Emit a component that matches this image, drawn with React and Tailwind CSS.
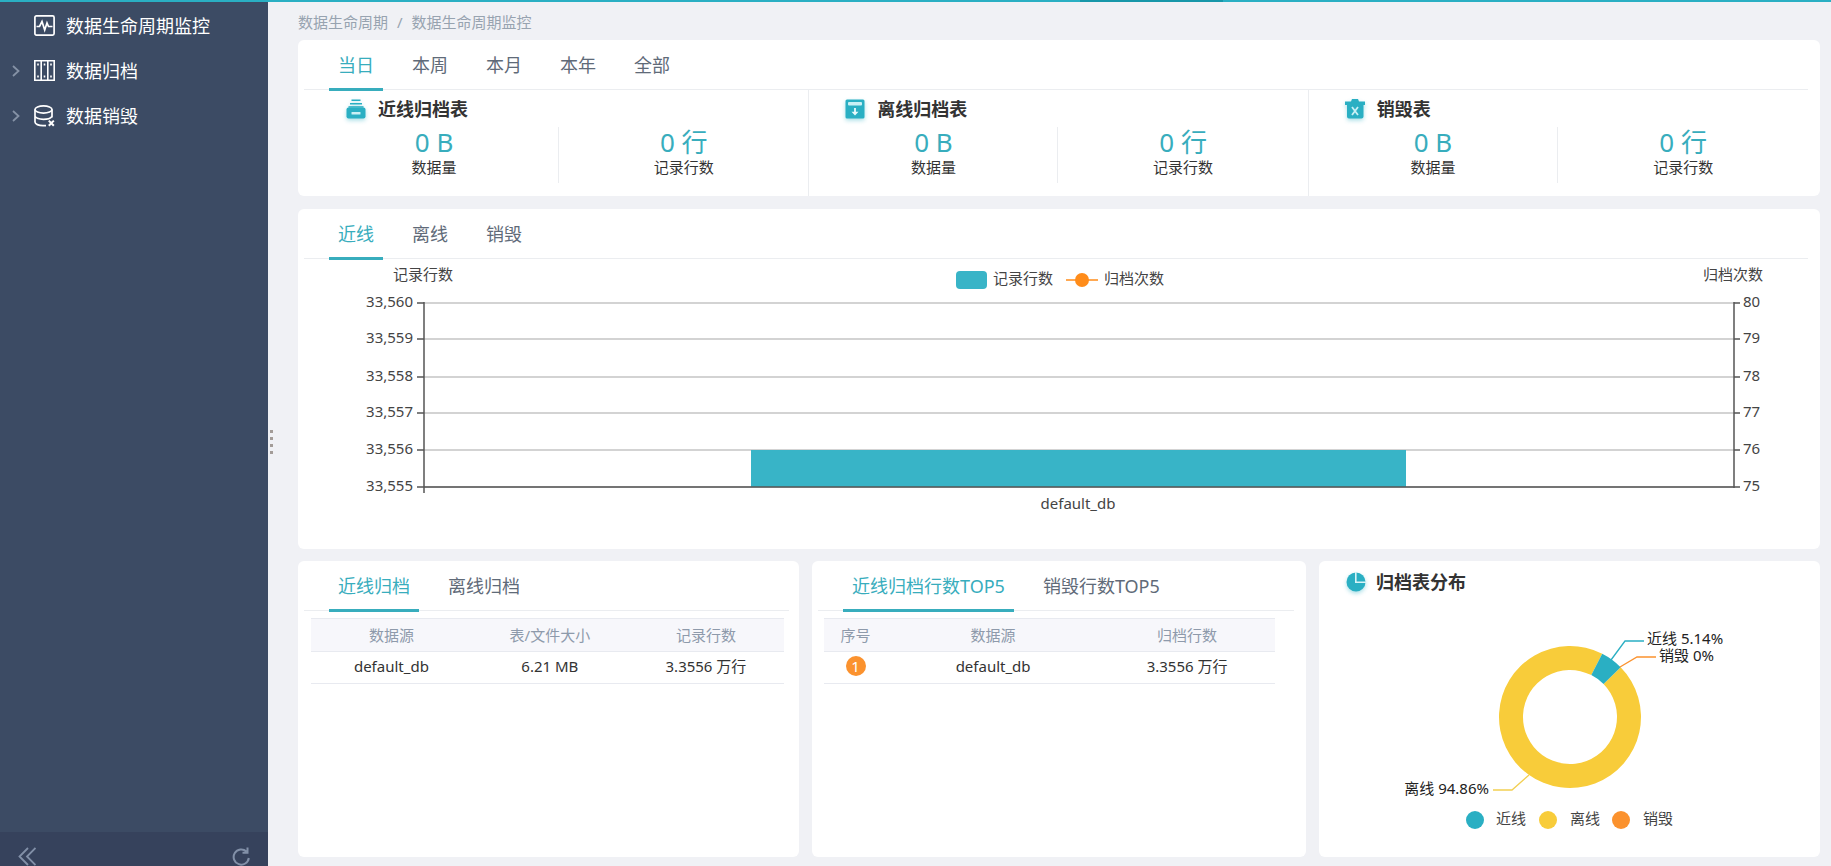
import { useState } from "react";

const menu = [
  { id: "monitor", label: "数据生命周期监控", expandable: false },
  { id: "archive", label: "数据归档", expandable: true },
  { id: "destroy", label: "数据销毁", expandable: true },
];

const stats = [
  { id: "near", title: "近线归档表", size: "0 B", rows: "0 行" },
  { id: "offline", title: "离线归档表", size: "0 B", rows: "0 行" },
  { id: "destroy", title: "销毁表", size: "0 B", rows: "0 行" },
];

const ticks = [
  { y: 44, left: "33,560", right: "80" },
  { y: 80, left: "33,559", right: "79" },
  { y: 118, left: "33,558", right: "78" },
  { y: 154, left: "33,557", right: "77" },
  { y: 191, left: "33,556", right: "76" },
  { y: 228, left: "33,555", right: "75" },
];

const shares = [
  { label: "近线", color: "#2aafc3", dot: 156, text: 177 },
  { label: "离线", color: "#f8cc3a", dot: 229, text: 251 },
  { label: "销毁", color: "#fb922e", dot: 302, text: 324 },
];

const MenuIcon = ({ id }) => {
  if (id === "monitor") {
    return (
      <svg width="21" height="21" viewBox="0 0 21 21" fill="none" stroke="currentColor" strokeWidth="1.7">
        <rect x="0.9" y="0.9" width="19.2" height="19.2" rx="1.5" />
        <path d="M2.500 11.500h3L8 6.500l2.700 8.500 2.300-7 1.500 3.500h4" />
      </svg>
    );
  }
  if (id === "archive") {
    return (
      <svg width="21" height="21" viewBox="0 0 21 21" fill="none" stroke="currentColor" strokeWidth="1.6">
        <path d="M0.8 0.8h19.4v19.4H0.8zM7.2 1v19M13.8 1v19" />
        <path d="M4 3.5v2M4 15.5v2M10.5 3.5v2M10.5 15.5v2M17 3.5v2M17 15.5v2" />
      </svg>
    );
  }
  return (
    <svg width="21" height="22" viewBox="0 0 21 22" fill="none" stroke="currentColor" strokeWidth="1.7">
      <ellipse cx="9.5" cy="4.5" rx="8.5" ry="3.6" />
      <path d="M1 4.5v12.6c0 2 3.6 3.6 8 3.6h3M18 4.5v8M1 10.7c0 2 3.8 3.6 8.5 3.6 3.6 0 7-1 8.2-2.6" />
      <path d="M14.8 15.6l5 5.200M19.8 15.600l-5 5.200" strokeWidth="2" />
    </svg>
  );
};

const StatIcon = ({ id }) => (
  <svg width="20" height="20" viewBox="0 0 20 20" className="shrink-0 drop-shadow-[0_2px_2px_rgba(42,175,195,0.4)]">
    {id === "near" && (
      <>
        <path d="M5.5 0.500h9v1.500h-9zM4 4h12v1.500H4z" fill="#2aafc3" />
        <path d="M2.500 7.200h15v1.500h-15z" fill="#2aafc3" />
        <rect x="0.5" y="8.500" width="19" height="11" rx="2" fill="#2aafc3" />
        <rect x="5.5" y="13" width="9" height="2.4" rx="0.5" fill="#c9f0f5" />
      </>
    )}
    {id === "offline" && (
      <>
        <rect x="0.5" y="0.5" width="19" height="19" rx="1.5" fill="#2aafc3" />
        <rect x="3" y="3" width="14" height="3.4" rx="1" fill="#c9f0f5" />
        <path d="M9.1 9h1.800v3.800h2.600L10 16.500l-3.500-3.700h2.600z" fill="#e9fafc" />
      </>
    )}
    {id === "destroy" && (
      <>
        <path d="M0 2.500h6L7 0h6l1 2.500h6V6h-1.500v11.500a2 2 0 0 1-2 2H4a2 2 0 0 1-2-2V6H0z" fill="#2aafc3" />
        <path d="M7 8l6 8M13 8l-6 8" stroke="#c9f0f5" strokeWidth="1.8" />
      </>
    )}
    {id === "pie" && (
      <>
        <circle cx="10" cy="10" r="9.500" fill="#2aafc3" />
        <path d="M9.800 0v10.300H20" fill="none" stroke="#d8f4f7" strokeWidth="1.600" />
      </>
    )}
  </svg>
);

const Tabs = ({ items }) => {
  const [active, setActive] = useState(items[0]);
  return (
    <div role="tablist" className="flex h-[50px] gap-5 border-b border-[#ebedf0] pl-[25px]">
      {items.map(t => (
        <button key={t} role="tab" aria-selected={active === t} onClick={() => setActive(t)}
          className={`-mb-0.5 h-[51px] border-b-3 px-[9px] pt-0.5 text-[18px] leading-[46px] whitespace-nowrap cursor-pointer
            ${active === t ? "border-[#38adbd] text-[#38adbd]" : "border-transparent text-[#606a78]"}`}>
          {t}
        </button>
      ))}
    </div>
  );
};

const BarChart = () => (
  <svg viewBox="0 0 1522 290" className="block w-full" fontSize="15" fill="#444">
    {/* axis names */}
    <text x="125" y="21" textAnchor="middle">记录行数</text>
    <text x="1435" y="21" textAnchor="middle">归档次数</text>

    {/* legend */}
    <rect x="658" y="12" width="31" height="18" rx="4" fill="#38b4c7" />
    <text x="695" y="25">记录行数</text>
    <path d="M768 21h32" stroke="#ff8c1a" strokeWidth="1.5" />
    <circle cx="784" cy="21" r="7" fill="#ff8c1a" />
    <text x="806" y="25">归档次数</text>

    {ticks.map(t => (
      <g key={t.y}>
        <path d={`M126 ${t.y}H1436`} stroke="#d3d3d3" strokeWidth="2" />
        <path d={`M119 ${t.y}h7M1436 ${t.y}h6`} stroke="#555" strokeWidth="1.5" />
        <text x="115" y={t.y + 4} textAnchor="end">{t.left}</text>
        <text x="1445" y={t.y + 4}>{t.right}</text>
      </g>
    ))}

    <rect x="453" y="191" width="655" height="37" fill="#38b4c7" />
    <path d="M126 43v191M1436 43v186M126 228h1310" stroke="#555" strokeWidth="1.5" />
    <text x="780" y="250" textAnchor="middle">default_db</text>
  </svg>
);

// start / end are degrees clockwise from the top
const arc = (start, end) => {
  const p = (r, a) => `${251 + r * Math.sin(a * Math.PI / 180)} ${115 - r * Math.cos(a * Math.PI / 180)}`;
  const large = end - start > 180 ? 1 : 0;
  return `M${p(71, start)}A71 71 0 ${large} 1 ${p(71, end)}L${p(47, end)}A47 47 0 ${large} 0 ${p(47, start)}Z`;
};

const DonutChart = () => (
  <svg viewBox="0 0 501 255" className="block w-full" fontSize="15">
    <path d={arc(45.5, 387)} fill="#f8cc3a" />
    <path d={arc(27, 45.5)} fill="#2aafc3" />
    <g fill="none" strokeWidth="1.3">
      <path d="M292 58l14-19h19" stroke="#2aafc3" />
      <path d="M301 65l17-10h19" stroke="#fb922e" />
      <path d="M210 173l-17 15h-19" stroke="#f2cf52" />
    </g>
    <g fill="#222">
      <text x="328" y="42">近线 5.14%</text>
      <text x="340" y="59">销毁 0%</text>
      <text x="170" y="192" textAnchor="end">离线 94.86%</text>
    </g>
    {shares.map(s => (
      <g key={s.label}>
        <circle cx={s.dot} cy="218" r="9" fill={s.color} />
        <text x={s.text} y="222" fill="#444">{s.label}</text>
      </g>
    ))}
  </svg>
);

const th = "h-[33px] border-y border-[#e8eaf0] bg-[#f7f7fb] p-0 font-normal text-[#8e9aab]";
const td = "h-8 border-b border-[#e8eaf0] p-0 pb-1";

const App = () => {
  return (
    <div className="flex min-h-screen flex-col bg-[#f0f1f5] font-['Noto_Sans','Noto_Sans_CJK_SC',sans-serif] text-[15px] leading-5 text-[#333]">
      <div className="flex h-0.5 bg-[#2aafc3]">
        <div className="ml-[59%] w-[143px] bg-[#1797a9]" />
      </div>

      <div className="flex flex-1">
        {/* SIDEBAR */}
        <aside className="flex w-[268px] shrink-0 flex-col bg-[#3c4b64]">
          <nav className="flex-1 pt-px">
            {menu.map(m => (
              <a key={m.id} href="#" className="flex h-[45px] items-center pl-3 text-[18px] text-white">
                <span className="w-[22px] text-[#8592a6]">
                  {m.expandable && (
                    <svg width="8" height="12" viewBox="0 0 8 12" fill="none" stroke="currentColor" strokeWidth="1.8">
                      <path d="M1 1l5.5 5L1 11" />
                    </svg>
                  )}
                </span>
                <MenuIcon id={m.id} />
                <span className="ml-[11px]">{m.label}</span>
              </a>
            ))}
          </nav>
          <div className="flex h-[34px] items-end justify-between bg-[#36425c] px-[18px] text-[#8290a8]">
            <button aria-label="收起">
              <svg width="18" height="19" viewBox="0 0 18 19" fill="none" stroke="currentColor" strokeWidth="1.8">
                <path d="M10 1L1.5 9.5 10 18M17.5 1L9 9.5l8.5 8.5" />
              </svg>
            </button>
            <button aria-label="刷新">
              <svg width="18" height="19" viewBox="0 0 18 19" fill="none" stroke="currentColor" strokeWidth="2">
                <path d="M14.5 4.5A7.6 7.6 0 1 0 16.8 11M15.5 0.5v5.300h-5" />
              </svg>
            </button>
          </div>
        </aside>

        {/* RESIZE HANDLE */}
        <div className="flex w-[30px] shrink-0 flex-col items-start justify-center gap-1 pt-4 pl-0.5">
          <i className="size-[3px] bg-[#a39c98]" />
          <i className="size-[3px] bg-[#a39c98]" />
          <i className="size-[3px] bg-[#a39c98]" />
          <i className="size-[3px] bg-[#a39c98]" />
        </div>

        <main className="min-w-0 flex-1 pr-[11px] pb-[9px]">
          <nav className="flex h-[38px] items-center gap-[9px] pt-0.5 text-[#97a3b0]">
            <a href="#">数据生命周期</a>
            <span>/</span>
            <a href="#">数据生命周期监控</a>
          </nav>

          {/* STATS */}
          <section className="rounded-md bg-white pr-3 pl-1.5">
            <Tabs items={["当日", "本周", "本月", "本年", "全部"]} />
            <div className="ml-1.5 grid grid-cols-3 divide-x divide-[#ebedf0]">
              {stats.map(s => (
                <div key={s.id} className="h-[106px] pt-[7px]">
                  <h3 className="flex h-6 items-center gap-3 pl-9 text-[18px] font-bold">
                    <StatIcon id={s.id} />
                    {s.title}
                  </h3>
                  <div className="mt-1.5 grid h-14 grid-cols-2 divide-x divide-[#ebedf0] text-center">
                    <div>
                      <div className="text-[26px] leading-[30px] text-[#38adbd]">{s.size}</div>
                      <div>数据量</div>
                    </div>
                    <div>
                      <div className="text-[26px] leading-[30px] text-[#38adbd]">{s.rows}</div>
                      <div>记录行数</div>
                    </div>
                  </div>
                </div>
              ))}
            </div>
          </section>

          {/* BAR CHART */}
          <section className="mt-[13px] rounded-md bg-white">
            <div className="pr-3 pl-1.5">
              <Tabs items={["近线", "离线", "销毁"]} />
            </div>
            <BarChart />
          </section>

          <div className="mt-3 grid grid-cols-[501fr_494fr_501fr] gap-[13px]">
            <section className="rounded-md bg-white pr-2.5 pl-1.5">
              <Tabs items={["近线归档", "离线归档"]} />
              <div className="mt-[7px] pr-[5px] pl-[7px]">
                <table className="w-full table-fixed border-collapse text-center">
                  <thead>
                    <tr>
                      <th className={`w-[34%] ${th}`}>数据源</th>
                      <th className={`w-[33%] ${th}`}>表/文件大小</th>
                      <th className={`w-[33%] ${th}`}>记录行数</th>
                    </tr>
                  </thead>
                  <tbody>
                    <tr>
                      <td className={td}>default_db</td>
                      <td className={td}>6.21 MB</td>
                      <td className={td}>3.3556 万行</td>
                    </tr>
                  </tbody>
                </table>
              </div>
            </section>

            <section className="rounded-md bg-white pr-3 pl-1.5">
              <Tabs items={["近线归档行数TOP5", "销毁行数TOP5"]} />
              <div className="mt-[7px] pr-[19px] pl-1.5">
                <table className="w-full table-fixed border-collapse text-center">
                  <thead>
                    <tr>
                      <th className={`w-[14%] ${th}`}>序号</th>
                      <th className={`w-[47%] ${th}`}>数据源</th>
                      <th className={`w-[39%] ${th}`}>归档行数</th>
                    </tr>
                  </thead>
                  <tbody>
                    <tr>
                      <td className={td}>
                        <span className="mx-auto block size-5 rounded-full bg-[#fb922e] text-white">1</span>
                      </td>
                      <td className={td}>default_db</td>
                      <td className={td}>3.3556 万行</td>
                    </tr>
                  </tbody>
                </table>
              </div>
            </section>

            <section className="rounded-md bg-white">
              <h3 className="flex h-[41px] items-center gap-2.5 pl-[27px] text-[18px] font-bold">
                <StatIcon id="pie" />
                归档表分布
              </h3>
              <DonutChart />
            </section>
          </div>
        </main>
      </div>
    </div>
  );
};

export default App;
